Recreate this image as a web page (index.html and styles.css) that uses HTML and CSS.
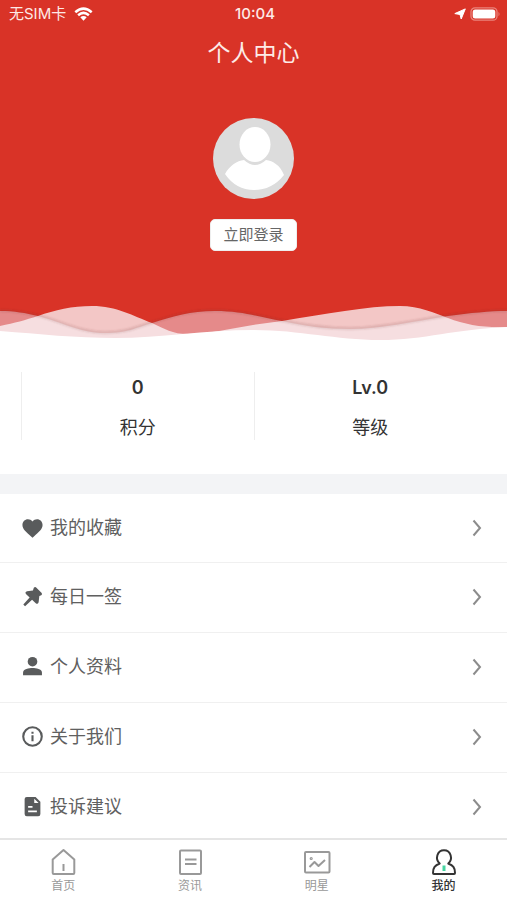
FILE: index.html
```html
<!DOCTYPE html>
<html lang="zh-CN">
<head>
<meta charset="utf-8">
<meta name="viewport" content="width=device-width, initial-scale=1">
<title>个人中心</title>
<link rel="stylesheet" href="styles.css">
</head>
<body>
<div class="app">
  <header class="hero">
    <div class="status">
      <div class="status-left">
        <span>无SIM卡</span>
        <svg class="wifi" viewBox="0 0 19 14" aria-hidden="true"><path d="M1.300 5.200Q9.500-1.900 17.700 5.200M4.100 8.200Q9.500 3.600 14.900 8.200" fill="none" stroke="currentColor" stroke-width="2.500"/><path d="M9.500 13.700 6.300 10.300Q9.500 7.800 12.700 10.300Z" fill="currentColor"/></svg>
      </div>
      <span class="time">10:04</span>
      <div class="status-right">
        <svg class="locate" viewBox="0 0 12 12" aria-hidden="true"><path d="M11.300.9 7.200 11 6 6.500.8 5.600Z" fill="currentColor" stroke="currentColor" stroke-linejoin="round"/></svg>
        <svg class="battery" viewBox="0 0 31 14" aria-hidden="true"><rect x="1" y=".8" width="26" height="12.400" rx="4" fill="none" stroke="#ea847c" stroke-width="1.300"/><rect x="2.700" y="2.500" width="22.600" height="9" rx="2.500" fill="#fff"/><path d="M28.500 4.700Q30.500 7 28.500 9.300Z" fill="#ea847c"/></svg>
      </div>
    </div>
    <h1>个人中心</h1>
    <svg class="avatar" viewBox="0 0 81 81" role="img" aria-label="头像"><circle cx="40.500" cy="40.500" r="40.500" fill="#dcdcdc"/><path d="M12 56C17 47 24 43 31 42Q42 52 53 42C60 43 67 47 71 57Q59 72 41 72T12 56Z" fill="#fff"/><ellipse cx="42" cy="26.500" rx="17" ry="19" fill="#dcdcdc"/><ellipse cx="42" cy="26.500" rx="15.500" ry="17.500" fill="#fff"/></svg>
    <button class="login" type="button">立即登录</button>
    <svg class="waves" viewBox="0 0 507 48" preserveAspectRatio="none" aria-hidden="true">
      <defs><filter id="soft" x="-5%" y="-30%" width="110%" height="160%"><feGaussianBlur stdDeviation="1.200"/></filter></defs>
      <path d="M0 15C15 15 25 17 38 20C62 26 80 37 105 37C127 37 135 32 152 27C174 20 190 15 215 15C245 15 262 22 282 25C305 30 325 33 350 33C380 33 415 25 448 20C470 17 490 15 507 15V48H0Z" fill="#f5f2ff" fill-opacity=".46"/>
      <path d="M0 30C15 27 25 24 38 20C55 14 72 10 92 10C117 10 133 20 152 27C165 33 172 38 188 38C207 38 230 33 253 29L282 25C325 18 367 10 400 10C420 10 434 17 448 22C466 29 485 32 507 31V48H0Z" fill="#fbf9fc" fill-opacity=".75"/>
      <path d="M0 14.500C15 14.500 25 16.500 38 19.500C62 25.500 80 36.500 105 36.500C127 36.500 135 31.500 152 26.500C174 19.500 190 14.500 215 14.500C245 14.500 262 21.500 282 24.500C305 29.500 325 32.500 350 32.500C380 32.500 415 24.500 448 19.500C470 16.500 490 14.500 507 14.500" fill="none" stroke="#703030" stroke-opacity=".22" stroke-width="2" filter="url(#soft)"/>
      <path d="M0 35C40 38 75 42 115 42C160 42 205 34 253 34C300 34 335 44 380 44C425 44 455 33 507 31V48H0Z" fill="#fff"/>
    </svg>
  </header>

  <main>
    <section class="stats">
      <div class="stat"><strong>0</strong><span>积分</span></div>
      <div class="stat"><strong>Lv.0</strong><span>等级</span></div>
    </section>
    <nav class="menu" aria-label="个人菜单">
      <a href="#favorites"><svg class="icon" viewBox="0 0 24 24" aria-hidden="true"><path d="m12 22.500-1.600-1.400C4.400 15.700 .5 12.400 .5 7.900 .5 4.300 3.300 1.500 6.800 1.500c2 0 3.900.9 5.200 2.400C13.300 2.400 15.200 1.500 17.200 1.500c3.500 0 6.300 2.800 6.300 6.400 0 4.500-3.900 7.800-9.900 13.200Z"/></svg><span>我的收藏</span><svg class="chevron" viewBox="0 0 10 18" aria-hidden="true"><path d="m1.500 1.500 6.500 7.500-6.500 7.500"/></svg></a>
      <a href="#daily"><svg class="icon" viewBox="0 0 24 24" aria-hidden="true"><path d="M13.500 2Q15 .5 16.500 2L22.500 8Q23.500 9.500 22 10.500L19.800 11.500 19 18.500Q18 21.500 15.700 19.700L11.500 15.700 3.500 23 1.500 21.200 8.700 13 4.500 9.200Q3 6.700 5.800 6L12.500 5Z"/></svg><span>每日一签</span><svg class="chevron" viewBox="0 0 10 18" aria-hidden="true"><path d="m1.500 1.500 6.500 7.500-6.500 7.500"/></svg></a>
      <a href="#profile"><svg class="icon" viewBox="0 0 24 24" aria-hidden="true"><circle cx="12" cy="6.500" r="5.500"/><path d="M1.200 22V19C1.200 15 8 13.800 12 13.800s10.800 1.200 10.800 5.200V22Z"/></svg><span>个人资料</span><svg class="chevron" viewBox="0 0 10 18" aria-hidden="true"><path d="m1.500 1.500 6.500 7.500-6.500 7.500"/></svg></a>
      <a href="#about"><svg class="icon" viewBox="0 0 24 24" aria-hidden="true"><circle cx="12" cy="12" r="10.600" fill="none" stroke="currentColor" stroke-width="2.400"/><path d="M10.800 10.500h2.400V17.500h-2.400ZM10.800 6.500h2.400v2.300h-2.400Z"/></svg><span>关于我们</span><svg class="chevron" viewBox="0 0 10 18" aria-hidden="true"><path d="m1.500 1.500 6.500 7.500-6.500 7.500"/></svg></a>
      <a href="#feedback"><svg class="icon" viewBox="0 0 24 24" aria-hidden="true"><path fill-rule="evenodd" d="M5.500 1H15.500L21 6.500V20.500Q21 23 18.500 23H5.500Q3 23 3 20.500V3.500Q3 1 5.500 1ZM14 3V8H19ZM7 11.500V13.500H12V11.500ZM7 16.500V18.500H17V16.500Z"/></svg><span>投诉建议</span><svg class="chevron" viewBox="0 0 10 18" aria-hidden="true"><path d="m1.500 1.500 6.500 7.500-6.500 7.500"/></svg></a>
    </nav>
  </main>

  <nav class="tabs" aria-label="主导航">
    <a href="#home"><svg viewBox="0 0 28 28" aria-hidden="true"><path d="M3.700 11.500V25Q3.700 26 4.700 26H24.300Q25.300 26 25.300 25V11.500L14.500 2ZM14.500 16V23"/></svg><span>首页</span></a>
    <a href="#news"><svg viewBox="0 0 28 28" aria-hidden="true"><rect x="4" y="2.500" width="21" height="23.500" rx="1"/><path d="M9 11.500H20.500M9 16H20.500"/></svg><span>资讯</span></a>
    <a href="#stars"><svg viewBox="0 0 28 28" aria-hidden="true"><rect x="2" y="4" width="24.500" height="20.500" rx="1"/><path d="m6.500 19 5-5 4 4L22 12"/><circle cx="8.200" cy="10.500" r=".6"/></svg><span>明星</span></a>
    <a href="#me" class="active" aria-current="page"><svg viewBox="0 0 28 28" aria-hidden="true"><path d="M9.700 15.500C4.800 11 7 2.200 14 2.200S23.200 11 18.300 15.500C23 17.500 25 19.500 25 25Q25 26 24 26H4Q3 26 3 25C3 19.500 5 17.500 9.700 15.500Z"/><path class="accent" d="M14 17.500V23"/></svg><span>我的</span></a>
  </nav>
</div>
</body>
</html>
```
FILE: styles.css
```css
* {
  box-sizing: border-box;
}

body {
  margin: 0;
  background: #fff;
  color: #333;
  font-family: "Liberation Sans", "Noto Sans CJK SC", sans-serif;
}

a {
  color: inherit;
  text-decoration: none;
}

svg {
  display: block;
  flex: none;
}

.app {
  display: flex;
  flex-direction: column;
  height: 100vh;
  overflow: hidden;
}

main {
  flex: 1;
  min-height: 0;
  overflow: hidden;
}

.hero {
  display: flex;
  flex-direction: column;
  align-items: center;
  background: #d93327;
  color: #fff;
}

.status {
  display: grid;
  grid-template-columns: 1fr auto 1fr;
  align-items: center;
  width: 100%;
  height: 28px;
  padding: 0 6px 0 9px;
  color: #fde9e6;
  font: 15px/20px Inter, "Noto Sans CJK SC", sans-serif;
}

.status-left {
  display: flex;
  align-items: center;
  gap: 8px;
}

.status-right {
  display: flex;
  align-items: center;
  justify-content: flex-end;
  gap: 4px;
}

.wifi {
  width: 19px;
  height: 14px;
  color: #fff;
}

.time {
  font-weight: 500;
}

.locate {
  width: 12px;
  height: 12px;
  color: #fff;
}

.battery {
  width: 31px;
  height: 14px;
}

h1 {
  margin: 7px 0 47px;
  color: #fdebe8;
  font-size: 23px;
  font-weight: 400;
  line-height: 36px;
}

.avatar {
  width: 81px;
  height: 81px;
}

.login {
  height: 32px;
  margin: 20px 0 45px;
  padding: 0 12px;
  border: 1px solid #eee;
  border-radius: 5px;
  background: #fff;
  color: #666;
  font-family: inherit;
  font-size: 15px;
  line-height: 24px;
}

.waves {
  width: 100%;
  height: 48px;
}

.stats {
  display: grid;
  grid-template-columns: 1fr 1fr;
  padding: 28px 21px 34px;
}

.stat {
  display: flex;
  flex-direction: column;
  align-items: center;
  gap: 12px;
  height: 68px;
  padding-top: 2px;
  border-left: 1px solid #eee;
  font-size: 18px;
  line-height: 28px;
}

.stat strong {
  font-family: Inter, sans-serif;
  font-weight: 600;
}

.menu {
  border-top: 20px solid #f3f4f6;
}

.menu a {
  display: flex;
  align-items: center;
  height: 70px;
  padding: 0 25px 2px 22px;
  border-bottom: 1px solid #f0f0f0;
  color: #606060;
  font-size: 18px;
  line-height: 26px;
}

.menu a:first-child {
  height: 69px;
  padding-bottom: 0;
}

.menu span {
  flex: 1;
  margin-left: 7px;
}

.icon {
  width: 21px;
  height: 21px;
  color: #595b5c;
  fill: currentColor;
}

.chevron {
  width: 10px;
  height: 18px;
  fill: none;
  stroke: #8c8c8c;
  stroke-width: 2;
}

.tabs {
  display: grid;
  grid-template-columns: repeat(4, 1fr);
  height: 62px;
  padding-top: 8px;
  border-top: 2px solid #e5e5e5;
  background: #fff;
  color: #999;
}

.tabs a {
  display: flex;
  flex-direction: column;
  align-items: center;
  font-size: 12px;
  line-height: 20px;
}

.tabs svg {
  width: 28px;
  height: 28px;
  fill: none;
  stroke: currentColor;
  stroke-width: 2;
  stroke-linejoin: round;
}

.tabs .active {
  color: #333;
  font-weight: 500;
}

.tabs .accent {
  stroke: #45d5a1;
  stroke-width: 3;
}
```
